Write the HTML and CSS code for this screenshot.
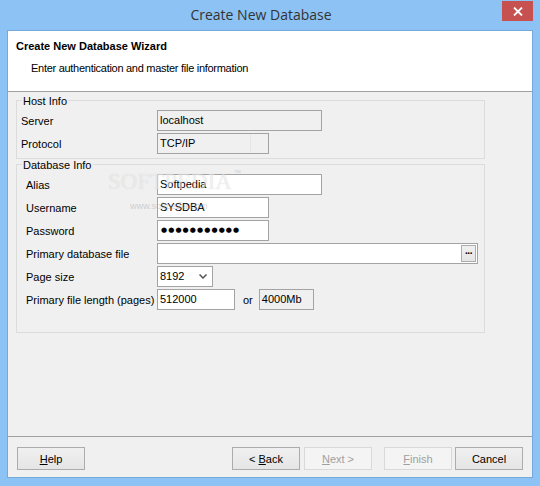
FILE: index.html
```html
<!DOCTYPE html>
<html>
<head>
<meta charset="utf-8">
<link rel="stylesheet" href="styles.css">
</head>
<body>
<div class="window">
  <div class="titlebar">
    <div class="title">Create New Database</div>
    <div class="close">
      <svg width="10" height="9" viewBox="0 0 10 9"><path d="M1 0.5 L9 8.5 M9 0.5 L1 8.5" stroke="#fff" stroke-width="1.8" fill="none"/></svg>
    </div>
  </div>
  <div class="client">
    <div class="header">
      <div class="h-title">Create New Database Wizard</div>
      <div class="h-sub">Enter authentication and master file information</div>
    </div>
    <div class="content">
      <div class="group host">
        <div class="legend">Host Info</div>
        <div class="row"><span class="label">Server</span><div class="field ro w165">localhost</div></div>
        <div class="row"><span class="label">Protocol</span><div class="field ro w112 combo-ro"><span class="val">TCP/IP</span><span class="sep"></span></div></div>
      </div>
      <div class="group db">
        <div class="legend">Database Info</div>
        <div class="row"><span class="label">Alias</span><div class="field w165">Softpedia</div></div>
        <div class="row"><span class="label">Username</span><div class="field w112">SYSDBA</div></div>
        <div class="row"><span class="label">Password</span><div class="field w112 pw">●●●●●●●●●●●</div></div>
        <div class="row"><span class="label">Primary database file</span><div class="field w321 file"><span class="val"></span><span class="browse">...</span></div></div>
        <div class="row"><span class="label">Page size</span><div class="field w56 combo"><span class="val">8192</span><span class="arrow"><svg width="8" height="5" viewBox="0 0 8 5"><path d="M0.5 0.5 L4 4 L7.5 0.5" stroke="#555" stroke-width="1.5" fill="none"/></svg></span></div></div>
        <div class="row"><span class="label">Primary file length (pages)</span><div class="field w78">512000</div><span class="or">or</span><div class="field ro w55">4000Mb</div></div>
      </div>
    </div>
    <div class="footer">
      <button class="btn help"><u>H</u>elp</button>
      <span class="spacer"></span>
      <button class="btn back">&lt; <u>B</u>ack</button>
      <button class="btn dis next"><u>N</u>ext &gt;</button>
      <button class="btn dis finish"><u>F</u>inish</button>
      <button class="btn cancel">Cancel</button>
    </div>
  </div>
  <div class="watermark">
    <span class="wm-big">SOFTPEDIA</span><span class="wm-tm">™</span>
    <span class="wm-small">www.softpedia.com</span>
  </div>
</div>
</body>
</html>
```

FILE: styles.css
```css
* { box-sizing: border-box; }
body {
  margin: 0;
  font-family: "Liberation Sans", Arial, sans-serif;
  font-size: 11px;
  color: #000;
}
.window {
  width: 540px;
  height: 486px;
  background: #8cc3f4;
  position: relative;
  display: flex;
  flex-direction: column;
  overflow: hidden;
}
.titlebar {
  height: 30px;
  display: flex;
  align-items: flex-start;
  flex: 0 0 30px;
}
.title {
  flex: 1;
  text-align: center;
  padding-left: 20px;
  font-family: "Open Sans", "Noto Sans", sans-serif;
  font-size: 14px;
  line-height: 30px;
  color: #333;
}
.close {
  width: 31px;
  height: 20px;
  margin-top: 1px;
  margin-right: 7px;
  background: #c75050;
  display: flex;
  align-items: center;
  justify-content: center;
}
.client {
  margin: 0 7px;
  height: 448px;
  border: 1px solid #74a9dc;
  background: #f0f0f0;
  display: flex;
  flex-direction: column;
}
.header {
  height: 61px;
  flex: 0 0 61px;
  background: #fff;
  border-bottom: 1px solid #a0a0a0;
  padding: 9px 0 0 8px;
}
.h-title {
  font-weight: bold;
  line-height: 13px;
}
.h-sub {
  line-height: 13px;
  margin-top: 9px;
  padding-left: 15px;
  letter-spacing: -0.28px;
}
.content {
  flex: 1;
  padding: 8px 0 0 8px;
}
.group {
  width: 469px;
  border: 1px solid #dcdcdc;
  display: flex;
  flex-direction: column;
  gap: 2px;
}
.group.host { padding-bottom: 4px; }
.group.db { margin-top: 5px; padding-bottom: 22px; }
.legend {
  align-self: flex-start;
  margin-top: -6px;
  margin-left: 5px;
  padding: 0 1px;
  background: #f0f0f0;
  line-height: 13px;
  height: 13px;
}
.row {
  display: flex;
  align-items: center;
  height: 21px;
}
.host .row { padding-left: 4px; }
.host .label { width: 136px; }
.db .row { padding-left: 9px; }
.db .label { width: 131px; }
.field {
  height: 21px;
  border: 1px solid #a3a3a3;
  background: #fff;
  padding: 0 2px;
  line-height: 19px;
  display: flex;
  align-items: center;
  white-space: nowrap;
}
.field.ro { background: #f0f0f0; }
.w165 { width: 165px; }
.w112 { width: 112px; }
.w321 { width: 321px; }
.w56 { width: 56px; }
.w78 { width: 78px; }
.w55 { width: 55px; }
.val { flex: 1; }
.combo-ro { padding-right: 0; }
.combo-ro .sep {
  width: 18px;
  height: 19px;
  border-left: 1px solid #e6e6e6;
}
.pw {
  font-family: "DejaVu Sans", sans-serif;
  font-size: 7px;
  letter-spacing: 1.1px;
  padding-left: 3px;
}
.file { padding-right: 1px; }
.browse {
  width: 15px;
  height: 17px;
  border: 1px solid #acacac;
  background: linear-gradient(#f0f0f0, #e5e5e5);
  font-weight: bold;
  font-size: 10px;
  line-height: 10px;
  text-align: center;
  letter-spacing: -0.5px;
}
.combo { padding-right: 0; }
.combo .arrow {
  width: 17px;
  height: 19px;
  display: flex;
  align-items: center;
  justify-content: center;
  padding-right: 2px;
}
.or {
  margin: 0 6px 0 8px;
}
.footer {
  flex: 0 0 41px;
  border-top: 1px solid #a0a0a0;
  display: flex;
  align-items: flex-start;
  padding: 10px 9px 0 9px;
}
.spacer { flex: 1; }
.btn {
  width: 68px;
  height: 23px;
  border: 1px solid #acacac;
  background: linear-gradient(#f0f0f0, #e5e5e5);
  font-family: "Liberation Sans", Arial, sans-serif;
  font-size: 11px;
  color: #000;
  padding: 0;
  margin: 0;
}
.btn.dis {
  border-color: #d9d9d9;
  background: #f4f4f4;
  color: #a0a0a0;
}
.next { margin-left: 4px; }
.finish { margin-left: 12px; }
.cancel { margin-left: 3px; }
.watermark {
  position: absolute;
  left: 108px;
  top: 169px;
  width: 140px;
  height: 45px;
  pointer-events: none;
}
.wm-big {
  position: absolute;
  left: 0;
  top: 0;
  font-family: "Liberation Serif", serif;
  font-size: 23px;
  color: rgba(255,255,255,0.55);
  text-shadow: 0 0 1px rgba(0,0,0,0.15);
}
.wm-tm {
  position: absolute;
  left: 126px;
  top: 0;
  font-size: 7px;
  color: rgba(180,180,180,0.6);
}
.wm-small {
  position: absolute;
  left: 22px;
  top: 32px;
  font-size: 9px;
  color: rgba(170,170,170,0.5);
}
```
